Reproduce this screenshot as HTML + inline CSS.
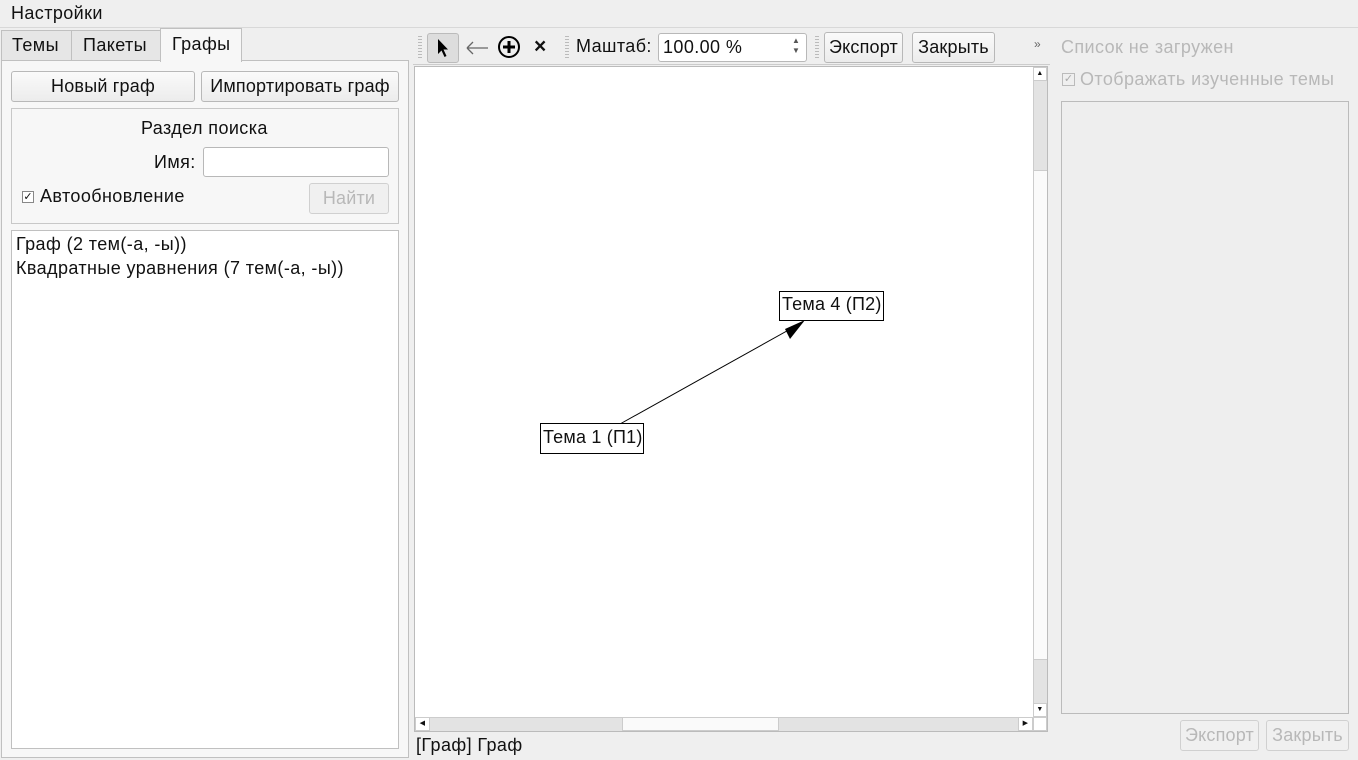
<!DOCTYPE html>
<html><head><meta charset="utf-8"><style>
*{box-sizing:border-box;margin:0;padding:0}
body{width:1358px;height:760px;background:#efefef;font-family:"Liberation Sans","DejaVu Sans",sans-serif;font-size:18px;letter-spacing:0.4px;color:#111;position:relative;overflow:hidden}
.a{position:absolute;white-space:nowrap}
.btn{position:absolute;border:1px solid #b8b8b8;border-radius:3px;background:linear-gradient(#fafafa,#ececec);text-align:center;line-height:26px;white-space:nowrap;letter-spacing:0.2px}
.dis{color:#b8b8b8;border-color:#d0d0d0;background:#f0f0f0}
.grip{position:absolute;width:4px;background:repeating-linear-gradient(#bbb 0 1px,transparent 1px 3px)}
</style></head><body>
<div class="a" style="left:11px;top:3px">Настройки</div>
<div class="a" style="left:0;top:27px;width:1358px;height:1px;background:#d8d8d8"></div>
<div class="a" style="left:1px;top:30px;width:71px;height:31px;border:1px solid #c0c0c0;background:#e6e6e6;padding:4px 0 0 10px">Темы</div>
<div class="a" style="left:71px;top:30px;width:90px;height:31px;border:1px solid #c0c0c0;background:#e6e6e6;padding:4px 0 0 11px">Пакеты</div>
<div class="a" style="left:160px;top:28px;width:82px;height:34px;border:1px solid #c0c0c0;border-bottom:none;background:#f7f7f7;padding:5px 0 0 11px;z-index:2">Графы</div>
<div class="a" style="left:1px;top:60px;width:408px;height:698px;border:1px solid #c0c0c0;background:#f7f7f7"></div>
<div class="btn" style="left:11px;top:71px;width:184px;height:31px;line-height:29px">Новый граф</div>
<div class="btn" style="left:201px;top:71px;width:198px;height:31px;line-height:29px">Импортировать граф</div>
<div class="a" style="left:11px;top:108px;width:388px;height:116px;border:1px solid #c8c8c8"></div>
<div class="a" style="left:141px;top:118px">Раздел поиска</div>
<div class="a" style="left:154px;top:152px">Имя:</div>
<div class="a" style="left:203px;top:147px;width:186px;height:30px;border:1px solid #b8b8b8;border-radius:3px;background:#fff"></div>
<div class="a" style="left:22px;top:191px;width:12px;height:12px;border:1px solid #888;background:#fff;font-size:11px;line-height:10px;text-align:center;letter-spacing:0">✓</div>
<div class="a" style="left:40px;top:186px">Автообновление</div>
<div class="btn dis" style="left:309px;top:183px;width:80px;height:31px;line-height:29px">Найти</div>
<div class="a" style="left:11px;top:230px;width:388px;height:519px;border:1px solid #c0c0c0;background:#fff;padding:1px 4px;line-height:24px">Граф (2 тем(-а, -ы))<br>Квадратные уравнения (7 тем(-а, -ы))</div>
<div class="grip" style="left:418px;top:36px;height:22px"></div>
<div class="a" style="left:427px;top:33px;width:32px;height:30px;border:1px solid #bbb;border-radius:3px;background:#ddd"></div>
<svg class="a" style="left:436px;top:38px" width="14" height="20" viewBox="0 0 14 20"><path d="M2 1 L2 16 L5.5 12.5 L8.5 19 L10.5 18 L7.5 11.5 L12 11.5 Z" fill="#000"/></svg>
<svg class="a" style="left:464px;top:38px" width="26" height="20"><path d="M3 10 H24 M3 10 L9 4 M3 10 L9 16" stroke="#666" stroke-width="1.3" fill="none"/></svg>
<svg class="a" style="left:497px;top:35px" width="26" height="26"><circle cx="12" cy="12" r="10" stroke="#000" stroke-width="2" fill="none"/><path d="M12 6 V18 M6 12 H18" stroke="#000" stroke-width="3"/></svg>
<div class="a" style="left:534px;top:35px;font-size:21px;font-weight:bold">×</div>
<div class="grip" style="left:565px;top:36px;height:22px"></div>
<div class="a" style="left:576px;top:36px">Маштаб:</div>
<div class="a" style="left:658px;top:33px;width:149px;height:29px;border:1px solid #b8b8b8;border-radius:3px;background:#fff;padding:3px 0 0 4px">100.00 %</div>
<div class="a" style="left:792px;top:36px;font-size:8px;color:#555;line-height:10px">▲<br>▼</div>
<div class="grip" style="left:815px;top:36px;height:22px"></div>
<div class="btn" style="left:824px;top:32px;width:79px;height:31px;line-height:29px">Экспорт</div>
<div class="btn" style="left:912px;top:32px;width:83px;height:31px;line-height:29px">Закрыть</div>
<div class="a" style="left:1034px;top:37px;font-size:12px;color:#666">»</div>
<div class="a" style="left:413px;top:64px;width:637px;height:1px;background:#ccc"></div>
<div class="a" style="left:414px;top:66px;width:634px;height:666px;border:1px solid #bbb;background:#fff"></div>
<div class="a" style="left:1033px;top:67px;width:14px;height:650px;background:#e3e3e3;border-left:1px solid #ccc"></div>
<div class="a" style="left:1033px;top:170px;width:14px;height:490px;background:#fafafa;border-left:1px solid #ccc;border-top:1px solid #ccc;border-bottom:1px solid #ccc"></div>
<div class="a" style="left:1033px;top:67px;width:14px;height:14px;background:#fff;border:1px solid #ccc;font-size:7px;text-align:center;line-height:12px">▲</div>
<div class="a" style="left:1033px;top:703px;width:14px;height:14px;background:#fff;border:1px solid #ccc;font-size:7px;text-align:center;line-height:12px">▼</div>
<div class="a" style="left:415px;top:717px;width:618px;height:14px;background:#e3e3e3;border-top:1px solid #ccc"></div>
<div class="a" style="left:622px;top:717px;width:157px;height:14px;background:#fafafa;border:1px solid #ccc"></div>
<div class="a" style="left:415px;top:717px;width:15px;height:14px;background:#fff;border:1px solid #ccc;font-size:7px;text-align:center;line-height:12px">◀</div>
<div class="a" style="left:1018px;top:717px;width:15px;height:14px;background:#fff;border:1px solid #ccc;font-size:7px;text-align:center;line-height:12px">▶</div>
<div class="a" style="left:1033px;top:717px;width:14px;height:14px;background:#fff;border:1px solid #ccc"></div>
<svg class="a" style="left:415px;top:67px" width="618" height="650"><line x1="205" y1="357" x2="388" y2="255" stroke="#000" stroke-width="1"/><path d="M390 253 L370 262 L375 272 Z" fill="#000"/></svg>
<div class="a" style="left:779px;top:291px;width:105px;height:30px;border:1px solid #000;background:#fff;padding:2px 0 0 2px;letter-spacing:0.2px">Тема 4 (П2)</div>
<div class="a" style="left:540px;top:423px;width:104px;height:31px;border:1px solid #000;background:#fff;padding:3px 0 0 2px;letter-spacing:0.2px">Тема 1 (П1)</div>
<div class="a" style="left:416px;top:735px">[Граф] Граф</div>
<div class="a" style="left:1061px;top:37px;color:#b8b8b8">Список не загружен</div>
<div class="a" style="left:1062px;top:73px;width:13px;height:13px;border:1px solid #bbb;font-size:11px;line-height:11px;text-align:center;color:#aaa;letter-spacing:0">✓</div>
<div class="a" style="left:1080px;top:69px;color:#b8b8b8">Отображать изученные темы</div>
<div class="a" style="left:1061px;top:101px;width:288px;height:613px;border:1px solid #bbb;background:#eeeeee"></div>
<div class="btn dis" style="left:1180px;top:720px;width:79px;height:31px;line-height:29px">Экспорт</div>
<div class="btn dis" style="left:1266px;top:720px;width:83px;height:31px;line-height:29px">Закрыть</div>
</body></html>
